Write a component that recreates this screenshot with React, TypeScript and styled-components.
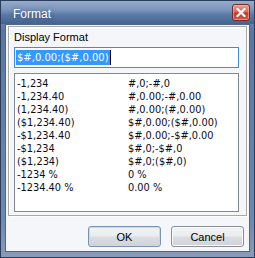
import React from 'react';
import styled, { createGlobalStyle } from 'styled-components';

const GlobalStyle = createGlobalStyle`
  html, body {
    margin: 0;
    padding: 0;
    background: #ffffff;
  }
`;

// Styled components
const Window = styled.div`
  box-sizing: border-box;
  width: 255px;
  height: 258px;
  display: flex;
  flex-direction: column;
  border: 1px solid #2b3d5c;
  background: linear-gradient(to bottom, #7d96bd 0%, #5a77a3 12%, #6d88b1 85%, #8a9bb8 100%);
`;

const TitleBar = styled.div`
  height: 25px;
  display: flex;
  align-items: flex-start;
  background: linear-gradient(to bottom, #96acca 0%, #7a94bb 40%, #5a79a5 60%, #45638f 100%);
`;

const Title = styled.span`
  padding: 6px 0 0 12px;
  color: #ffffff;
  font-family: "Liberation Sans", Arial, sans-serif;
  font-size: 12px;
  line-height: 14px;
  text-shadow: 0 0 4px rgba(30, 50, 90, 0.6);
`;

const CloseButton = styled.button`
  box-sizing: border-box;
  margin: 3px 4px 0 auto;
  width: 18px;
  height: 17px;
  padding: 0;
  display: flex;
  align-items: center;
  justify-content: center;
  border: 1px solid #7a2a22;
  border-radius: 3px;
  background: linear-gradient(to bottom, #eaa08f 0%, #d9665a 45%, #c13a2c 55%, #d25a46 100%);
  box-shadow: inset 0 0 0 1px rgba(255, 200, 190, 0.5);
`;

const Client = styled.div`
  flex: 1;
  display: flex;
  flex-direction: column;
  margin: 0 4px 5px 4px;
  padding: 1px 2px 4px 2px;
  background: #f4f6f9;
  border: 1px solid #4c6690;
`;

const GroupBox = styled.div`
  box-sizing: border-box;
  height: 190px;
  display: flex;
  flex-direction: column;
  padding: 4px 7px 3px 5px;
  border: 1px solid #a9a9a9;
  box-shadow: inset 1px 1px 0 #ffffff, 1px 1px 0 #ffffff;
`;

const Label = styled.div`
  height: 13px;
  font-family: "Liberation Sans", Arial, sans-serif;
  font-size: 11px;
  line-height: 13px;
  color: #000000;
`;

const FormatInput = styled.div`
  box-sizing: border-box;
  margin-top: 3px;
  height: 21px;
  padding: 2px 1px;
  display: flex;
  align-items: center;
  background: #ffffff;
  border: 1px solid #3c8fdc;
`;

const Selection = styled.span`
  padding: 0 1px;
  background: #3399ff;
  color: #ffffff;
  font-family: "DejaVu Sans", Verdana, sans-serif;
  font-size: 10px;
  line-height: 15px;
  border-right: 1px solid #000000;
`;

const ListBox = styled.div`
  box-sizing: border-box;
  margin-top: 5px;
  height: 139px;
  padding: 3px 2px;
  display: grid;
  grid-template-columns: 111px 1fr;
  grid-auto-rows: 13px;
  align-content: start;
  background: #ffffff;
  border: 1px solid #828790;
`;

const Cell = styled.div`
  font-family: "DejaVu Sans", Verdana, sans-serif;
  font-size: 9.8px;
  line-height: 13px;
  color: #0a0a1a;
  white-space: nowrap;
`;

const ButtonRow = styled.div`
  margin-top: 10px;
  display: flex;
  justify-content: flex-end;
  gap: 10px;
  padding-right: 3px;
`;

const DialogButton = styled.button<{ $isDefault?: boolean }>`
  box-sizing: border-box;
  width: 73px;
  height: 21px;
  padding: 0;
  border: 1px solid ${props => props.$isDefault ? '#7a92b4' : '#8a8f98'};
  border-radius: 3px;
  background: linear-gradient(to bottom, #f2f3f5 0%, #ebecee 48%, #dcdee2 52%, #cfd2d8 100%);
  box-shadow: inset 0 0 0 1px ${props => props.$isDefault ? '#c8d8ec' : '#fbfbfb'};
  font-family: "Liberation Sans", Arial, sans-serif;
  font-size: 11px;
  color: #000000;
`;

const rows: [string, string][] = [
  ['-1,234', '#,0;-#,0'],
  ['-1,234.40', '#,0.00;-#,0.00'],
  ['(1,234.40)', '#,0.00;(#,0.00)'],
  ['($1,234.40)', '$#,0.00;($#,0.00)'],
  ['-$1,234.40', '$#,0.00;-$#,0.00'],
  ['-$1,234', '$#,0;-$#,0'],
  ['($1,234)', '$#,0;($#,0)'],
  ['-1234 %', '0 %'],
  ['-1234.40 %', '0.00 %'],
];

const FormatDialog: React.FC = () => {
  return (
    <>
      <GlobalStyle />
      <Window>
        <TitleBar>
          <Title>Format</Title>
          <CloseButton aria-label="Close">
            <svg width="10" height="9" viewBox="0 0 10 9">
              <path d="M1.5 1 L8.5 8 M8.5 1 L1.5 8" stroke="#ffffff" strokeWidth="2.2" strokeLinecap="square" />
            </svg>
          </CloseButton>
        </TitleBar>
        <Client>
          <GroupBox>
            <Label>Display Format</Label>
            <FormatInput>
              <Selection>$#,0.00;($#,0.00)</Selection>
            </FormatInput>
            <ListBox>
              {rows.map(([sample, format]) => (
                <React.Fragment key={format}>
                  <Cell>{sample}</Cell>
                  <Cell>{format}</Cell>
                </React.Fragment>
              ))}
            </ListBox>
          </GroupBox>
          <ButtonRow>
            <DialogButton $isDefault>OK</DialogButton>
            <DialogButton>Cancel</DialogButton>
          </ButtonRow>
        </Client>
      </Window>
    </>
  );
};

export default FormatDialog;
